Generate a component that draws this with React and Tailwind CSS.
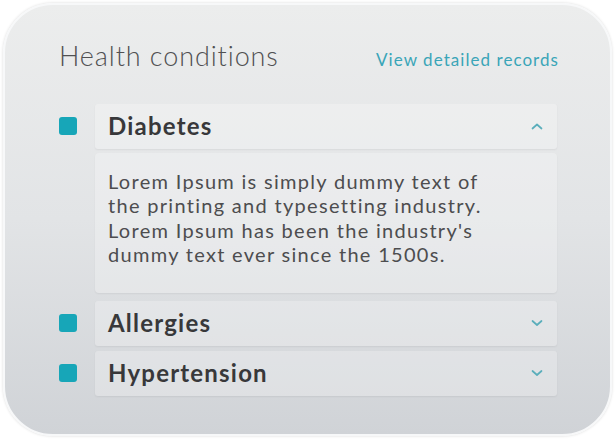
const font = { fontFamily: '"Lato", "Noto Sans", sans-serif' };

const Chevron = ({ up }) => (
  <svg width="14" height="10" viewBox="0 0 14 10" className="shrink-0">
    <path
      d={up ? 'M2.5 7.5 L7 3.5 L11.5 7.5' : 'M2.5 3 L7 7 L11.5 3'}
      fill="none"
      stroke="#5aaebb"
      strokeWidth="1.7"
      strokeLinecap="round"
      strokeLinejoin="round"
    />
  </svg>
);

const Row = ({ label, open }) => (
  <div className="flex items-center gap-[18px]">
    <div className="w-[18px] h-[18px] rounded-[3px] bg-[#17a6b8] shrink-0" />
    <div className="flex-1 h-[45px] flex items-center justify-between pl-[13px] pr-[13px] rounded-[3px] bg-white/25 shadow-[0_1px_2px_rgba(0,0,0,0.06)]">
      <span className="text-[24px] font-bold text-[#38383a] tracking-[1.2px]">{label}</span>
      <Chevron up={open} />
    </div>
  </div>
);

export default function App() {
  return (
    <div className="w-[615px] h-[439px] bg-white p-[3px]" style={font}>
      <div className="w-full h-full rounded-[50px] border-2 border-[#f7f8f9] bg-gradient-to-b from-[#eceded] via-[#e2e4e6] to-[#d0d3d7] shadow-[0_0_3px_rgba(0,0,0,0.15)] pl-[54px] pr-[53px] pt-[31px]">
        <div className="flex items-baseline justify-between">
          <h2 className="text-[27px] font-light text-[#505052] tracking-[0.9px]">Health conditions</h2>
          <a className="text-[17px] text-[#3aa5b8] tracking-[1.05px] -mr-[2px]">View detailed records</a>
        </div>
        <div className="mt-[27px] flex flex-col">
          <Row label="Diabetes" open />
          <div className="ml-[36px] mt-[4px] h-[140px] rounded-[4px] bg-white/25 shadow-[0_1px_2px_rgba(0,0,0,0.06)] pl-[13px] pt-[16px]">
            <p className="text-[20px] leading-[24.5px] text-[#4d4d4f] tracking-[1.3px]">
              Lorem Ipsum is simply dummy text of
              <br />
              the printing and typesetting industry.
              <br />
              Lorem Ipsum has been the industry's
              <br />
              dummy text ever since the 1500s.
            </p>
          </div>
          <div className="mt-[8px]">
            <Row label="Allergies" />
          </div>
          <div className="mt-[5px]">
            <Row label="Hypertension" />
          </div>
        </div>
      </div>
    </div>
  );
}
